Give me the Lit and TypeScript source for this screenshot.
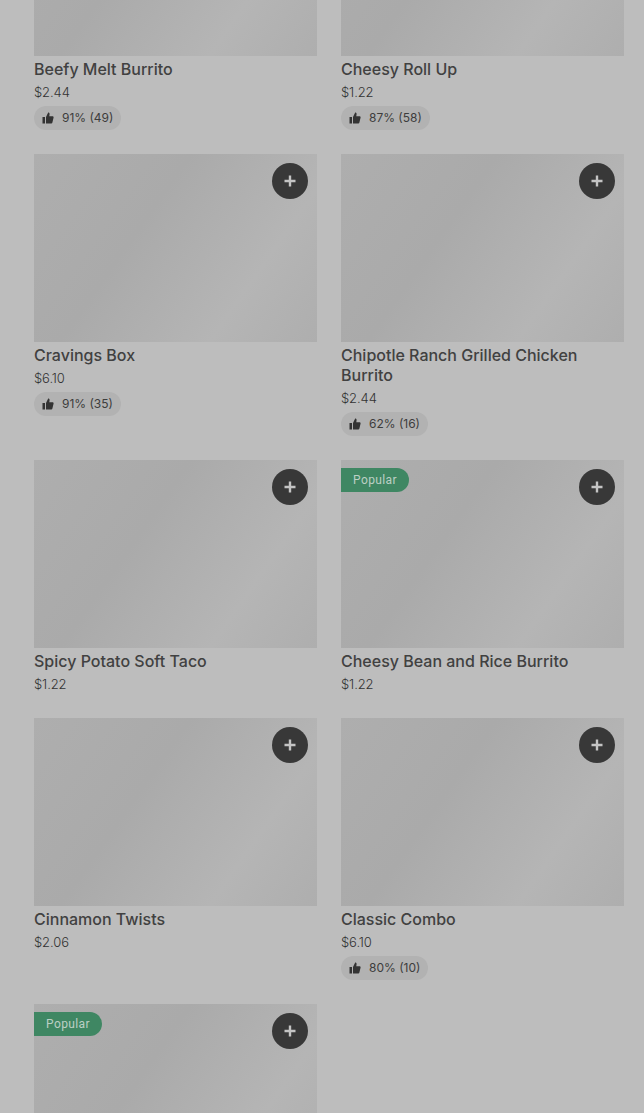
import { LitElement, html, css, nothing } from 'lit';
import { customElement } from 'lit/decorators.js';

type Item = { name: string; price: string; rating?: string; popular?: boolean };

const items: Item[] = [
  { name: 'Beefy Melt Burrito', price: '$2.44', rating: '91% (49)' },
  { name: 'Cheesy Roll Up', price: '$1.22', rating: '87% (58)' },
  { name: 'Cravings Box', price: '$6.10', rating: '91% (35)' },
  { name: 'Chipotle Ranch Grilled Chicken Burrito', price: '$2.44', rating: '62% (16)' },
  { name: 'Spicy Potato Soft Taco', price: '$1.22' },
  { name: 'Cheesy Bean and Rice Burrito', price: '$1.22', popular: true },
  { name: 'Cinnamon Twists', price: '$2.06' },
  { name: 'Classic Combo', price: '$6.10', rating: '80% (10)' },
  { name: '', price: '', popular: true },
];

@customElement('app-root')
export class AppRoot extends LitElement {
  static styles = css`
    :host {
      display: block;
      height: 1113px;
      overflow: hidden;
      background: #bdbdbd;
      font-family: Inter, Roboto, 'Liberation Sans', sans-serif;
      color: #3a3a3a;
    }
    .grid {
      display: grid;
      grid-template-columns: 283px 283px;
      column-gap: 24px;
      row-gap: 24px;
      align-items: start;
      margin-top: -132.5px;
      padding-left: 34px;
    }
    .thumb {
      position: relative;
      height: 188px;
      background: linear-gradient(125deg, #aeaeae 0%, #aaaaaa 38%, #b5b5b5 74%, #aeaeae 100%);
    }
    .add {
      position: absolute;
      top: 9.5px;
      right: 9.5px;
      width: 36px;
      height: 36px;
      border-radius: 50%;
      background: #383838;
      display: flex;
      align-items: center;
      justify-content: center;
    }
    .badge {
      position: absolute;
      top: 8px;
      left: 0;
      height: 24px;
      padding: 0 12px;
      display: flex;
      align-items: center;
      background: #3f8763;
      color: #bcd0c5;
      font-family: Roboto, sans-serif;
      font-size: 12px;
      letter-spacing: 0.4px;
      border-radius: 0 12px 12px 0;
    }
    .name {
      margin-top: 3px;
      font-size: 16px;
      font-weight: 500;
      line-height: 20px;
      color: #414141;
    }
    .price {
      margin-top: 3px;
      font-size: 13px;
      font-weight: 300;
      line-height: 20px;
      letter-spacing: -0.1px;
      color: #333;
    }
    .chip {
      display: inline-flex;
      align-items: center;
      gap: 8px;
      height: 24px;
      margin-top: 4px;
      padding: 0 8px;
      border-radius: 12px;
      background: #b2b2b2;
      font-size: 12px;
      color: #3d3d3d;
      vertical-align: top;
    }
    .chip svg {
      display: block;
    }
  `;

  private card(item: Item) {
    return html`<div class="card">
      <div class="thumb">
        ${item.popular ? html`<span class="badge">Popular</span>` : nothing}
        <span class="add">
          <svg width="14" height="14" viewBox="0 0 14 14">
            <path d="M5.800 1.500h2.400v4.300h4.300v2.400H8.200v4.300H5.800V8.200H1.500V5.800h4.300z" fill="#c4c4c4"></path>
          </svg>
        </span>
      </div>
      ${item.name ? html`<div class="name">${item.name}</div>` : nothing}
      ${item.price ? html`<div class="price">${item.price}</div>` : nothing}
      ${item.rating
        ? html`<div class="chip">
            <svg width="12" height="12" viewBox="0 0 12 12">
              <path d="M.5 5H3v6.500H.5zM4 11.500V5l2.200-4.500c.9 0 1.500.7 1.400 1.600L7.300 4.200h3.200c.8 0 1.300.7 1.100 1.400l-1.200 5c-.1.5-.6.9-1.100.9z" fill="#333"></path>
            </svg>
            ${item.rating}
          </div>`
        : nothing}
    </div>`;
  }

  render() {
    return html`<div class="grid">${items.map((item) => this.card(item))}</div>`;
  }
}
